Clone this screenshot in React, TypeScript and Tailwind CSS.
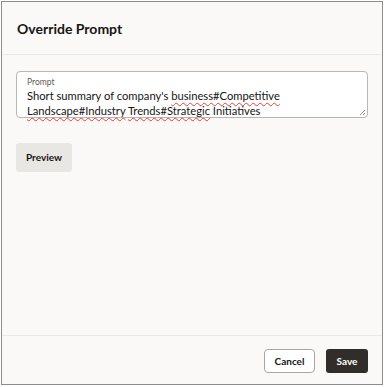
import React from "react";

const font = { fontFamily: "Lato, 'Noto Sans', sans-serif" };

function Squiggle({ children }: { children: React.ReactNode }) {
  return (
    <span className="underline decoration-wavy decoration-[#e0423a] decoration-1 underline-offset-[2px]">
      {children}
    </span>
  );
}

export default function App() {
  return (
    <div className="w-[385px] h-[387px] bg-white pt-px pl-px" style={font}>
      <div className="w-[382px] h-[384px] border border-[#8c8c8c] bg-[#faf9f8] flex flex-col">
        <div className="h-[53px] border-b border-[#ebe9e6] flex items-center pl-[15px]">
          <h1 className="text-[14px] font-bold text-[#161513]">Override Prompt</h1>
        </div>

        <div className="flex-1 px-[14px] pt-[16px]">
          <div className="relative h-[47px] w-[352px] bg-white border border-[#b9b7b3] rounded-[4px] pl-[10px] pt-[5px]">
            <div className="text-[8.5px] leading-[11px] text-[#5f5c58]">Prompt</div>
            <div className="text-[11.2px] leading-[15px] text-[#161513]">
              Short summary of company's <Squiggle>business#Competitive</Squiggle>
              <br />
              <Squiggle>Landscape#Industry</Squiggle> <Squiggle>Trends#Strategic</Squiggle> Initiatives
            </div>
            <svg
              className="absolute right-[1px] bottom-[1px]"
              width="7"
              height="7"
              viewBox="0 0 7 7"
            >
              <path d="M6 1 L1 6 M6 4 L4 6" stroke="#8f8d8a" strokeWidth="1" />
            </svg>
          </div>

          <button className="mt-[25px] h-[29px] w-[56px] rounded-[3px] bg-[#e9e7e4] text-[10px] font-bold text-[#161513]">
            Preview
          </button>
        </div>

        <div className="h-[49px] border-t border-[#ebe9e6] flex items-start justify-end gap-[11px] pr-[14px] pt-[13px]">
          <button className="h-[24px] w-[51px] rounded-[4px] border border-[#a9a6a2] bg-white text-[10px] font-bold text-[#161513]">
            Cancel
          </button>
          <button className="h-[24px] w-[42px] rounded-[3px] bg-[#312d2a] text-[10px] font-bold text-white">
            Save
          </button>
        </div>
      </div>
    </div>
  );
}
